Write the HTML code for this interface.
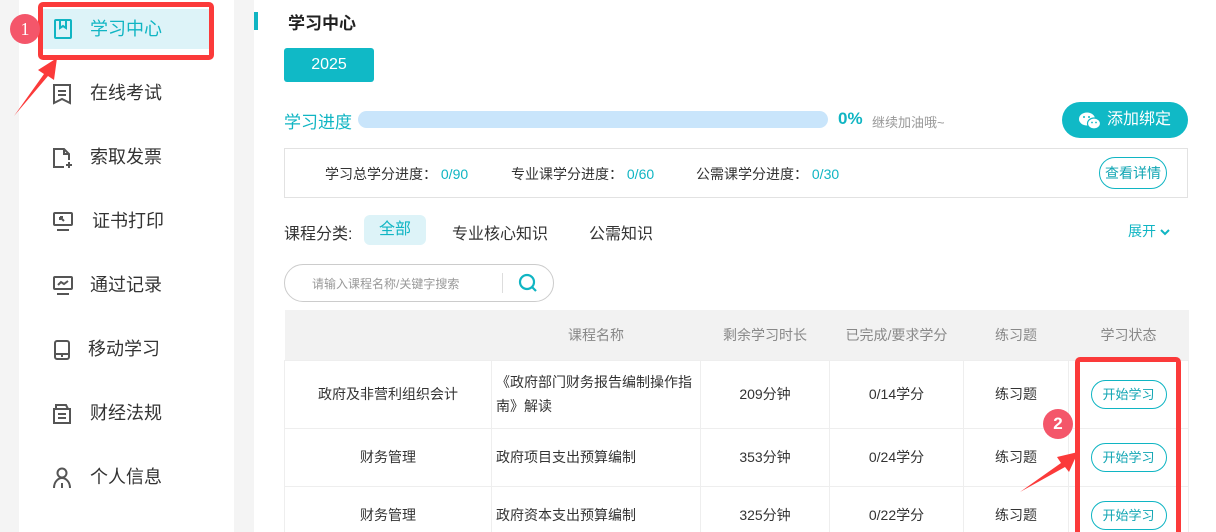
<!DOCTYPE html>
<html style="overflow:hidden;height:532px"><head><meta charset="utf-8"><style>
*{margin:0;padding:0;box-sizing:border-box}
body{width:1216px;height:532px;overflow:hidden;background:#f4f4f4;font-family:"Liberation Sans","Noto Sans CJK SC",sans-serif;position:relative;color:#333}
.a{position:absolute}
.side{left:19px;top:0;width:215px;height:532px;background:#fff}
.item{position:absolute;left:0;width:215px;height:40px;font-size:18px;color:#333;line-height:40px}
.item span{position:absolute;left:71px}
.item svg{position:absolute;left:33px;top:10px}
.main{left:254px;top:0;width:962px;height:532px;background:#fff}
.teal{color:#10b5c3}
table{border-collapse:collapse;position:absolute;left:284px;top:310px;width:904px;font-size:14px;table-layout:fixed}
th{background:#f2f2f2;color:#888;font-weight:normal;height:50px;border:none}
td{border:1px solid #eee;text-align:center;color:#333}
.btn{display:inline-block;border:1px solid #10b5c3;color:#10a5b3;border-radius:15px;width:76px;height:29px;line-height:27px;font-size:13px}
</style></head><body>
<div class="a side">
 <div class="item" style="top:9px;left:21px;width:171px;background:#ddf3f8;color:#10b5c3"><svg style="left:13px" width="20" height="20" viewBox="0 0 20 20" fill="none" stroke="#10b5c3" stroke-width="2"><rect x="2" y="1" width="16" height="18" rx="1"/><path d="M7 1v8l3-2 3 2V1"/></svg><span style="left:50px">学习中心</span></div>
 <div class="item" style="top:73px"><svg width="20" height="22" viewBox="0 0 20 22" fill="none" stroke="#555" stroke-width="2"><path d="M2 2h16v18l-8-4-8 4z"/><path d="M6 8h8M6 12h8"/></svg><span>在线考试</span></div>
 <div class="item" style="top:137px"><svg width="22" height="22" viewBox="0 0 22 22" fill="none" stroke="#555" stroke-width="2"><path d="M12 20H2V2h10l5 5v6"/><path d="M12 2v5h5M17 15v6M14 18h6"/></svg><span>索取发票</span></div>
 <div class="item" style="top:201px"><svg width="22" height="22" viewBox="0 0 22 22" fill="none" stroke="#555" stroke-width="2"><rect x="2" y="2" width="18" height="12" rx="1"/><path d="M5 19h12M8 6l4 4M8 6v3M8 6h3"/></svg><span style="left:73px">证书打印</span></div>
 <div class="item" style="top:265px"><svg width="22" height="22" viewBox="0 0 22 22" fill="none" stroke="#555" stroke-width="2"><rect x="2" y="2" width="18" height="12" rx="1"/><path d="M5 19h12M6 10l3-3 3 2 4-3"/></svg><span>通过记录</span></div>
 <div class="item" style="top:329px"><svg width="20" height="22" viewBox="0 0 20 22" fill="none" stroke="#555" stroke-width="2"><rect x="3" y="2" width="14" height="18" rx="2"/><path d="M3 15h14M9 17h2"/></svg><span style="left:69px">移动学习</span></div>
 <div class="item" style="top:393px"><svg width="20" height="22" viewBox="0 0 20 22" fill="none" stroke="#555" stroke-width="2"><path d="M2 20V6h16v14zM4 6V2h10l2 4M6 11h8M6 15h8"/></svg><span>财经法规</span></div>
 <div class="item" style="top:457px"><svg width="20" height="22" viewBox="0 0 20 22" fill="none" stroke="#555" stroke-width="2"><circle cx="10" cy="6" r="4.5"/><path d="M2 21c0-6 4-10 8-10s8 4 8 10M10 16v5"/></svg><span>个人信息</span></div>
</div>
<div class="a main"></div>
<div class="a" style="left:254px;top:12px;width:4px;height:18px;background:#10b5c3"></div>
<div class="a" style="left:288px;top:9px;font-size:17px;font-weight:bold;color:#222">学习中心</div>
<div class="a" style="left:284px;top:48px;width:90px;height:34px;background:#10b9c6;border-radius:3px;color:#fff;font-size:16px;text-align:center;line-height:34px">2025</div>
<div class="a teal" style="left:284px;top:108px;font-size:17px">学习进度</div>
<div class="a" style="left:358px;top:111px;width:470px;height:17px;background:#c9e5fb;border-radius:9px"></div>
<div class="a teal" style="left:838px;top:109px;font-size:17px;font-weight:bold">0%</div>
<div class="a" style="left:872px;top:112px;font-size:13px;color:#999">继续加油哦~</div>
<div class="a" style="left:1062px;top:102px;width:126px;height:36px;background:#10b9c6;border-radius:18px;color:#fff;font-size:16px;line-height:36px"><svg class="a" style="left:17px;top:10px" width="22" height="18" viewBox="0 0 22 18"><ellipse cx="8" cy="7" rx="8" ry="6.5" fill="#fff"/><ellipse cx="15" cy="11.5" rx="6.5" ry="5.5" fill="#fff" stroke="#10b9c6" stroke-width="1.2"/><circle cx="5" cy="5" r="1" fill="#10b9c6"/><circle cx="10" cy="5" r="1" fill="#10b9c6"/><circle cx="13" cy="10.5" r=".9" fill="#10b9c6"/><circle cx="17" cy="10.5" r=".9" fill="#10b9c6"/></svg><span class="a" style="left:45px">添加绑定</span></div>
<div class="a" style="left:284px;top:148px;width:904px;height:50px;border:1px solid #e2e2e2"></div>
<div class="a" style="left:325px;top:164px;font-size:14px;color:#333">学习总学分进度：&nbsp;<span class="teal">0/90</span></div>
<div class="a" style="left:511px;top:164px;font-size:14px;color:#333">专业课学分进度：&nbsp;<span class="teal">0/60</span></div>
<div class="a" style="left:696px;top:164px;font-size:14px;color:#333">公需课学分进度：&nbsp;<span class="teal">0/30</span></div>
<div class="a" style="left:1099px;top:157px;width:68px;height:32px;border:1px solid #10b5c3;border-radius:16px;color:#10a5b3;font-size:14px;text-align:center;line-height:30px">查看详情</div>
<div class="a" style="left:284px;top:220px;font-size:16px;color:#333">课程分类:</div>
<div class="a" style="left:364px;top:215px;width:62px;height:30px;background:#ddf3f8;border-radius:6px;color:#10b5c3;font-size:16px;text-align:center;line-height:30px">全部</div>
<div class="a" style="left:452px;top:220px;font-size:16px;color:#333">专业核心知识</div>
<div class="a" style="left:589px;top:220px;font-size:16px;color:#333">公需知识</div>
<div class="a teal" style="left:1128px;top:221px;font-size:14px">展开 <svg width="10" height="8" viewBox="0 0 10 8"><path d="M1 2l4 4 4-4" stroke="#10b5c3" stroke-width="2" fill="none"/></svg></div>
<div class="a" style="left:284px;top:264px;width:270px;height:38px;border:1px solid #ccc;border-radius:19px"></div>
<div class="a" style="left:312px;top:275px;font-size:12px;color:#999">请输入课程名称/关键字搜索</div>
<div class="a" style="left:502px;top:273px;width:1px;height:20px;background:#ddd"></div>
<svg class="a" style="left:518px;top:273px" width="20" height="20" viewBox="0 0 20 20" fill="none" stroke="#10b5c3" stroke-width="2.2"><circle cx="9" cy="9" r="7"/><path d="M14 14l4 4"/></svg>
<table>
<colgroup><col style="width:207px"><col style="width:209px"><col style="width:129px"><col style="width:134px"><col style="width:105px"><col style="width:120px"></colgroup>
<tr><th></th><th>课程名称</th><th>剩余学习时长</th><th>已完成/要求学分</th><th>练习题</th><th>学习状态</th></tr>
<tr style="height:68px"><td>政府及非营利组织会计</td><td style="text-align:left;padding-left:4px;line-height:24px">《政府部门财务报告编制操作指南》解读</td><td>209分钟</td><td>0/14学分</td><td>练习题</td><td><span class="btn">开始学习</span></td></tr>
<tr style="height:58px"><td>财务管理</td><td style="text-align:left;padding-left:4px">政府项目支出预算编制</td><td>353分钟</td><td>0/24学分</td><td>练习题</td><td><span class="btn">开始学习</span></td></tr>
<tr style="height:58px"><td>财务管理</td><td style="text-align:left;padding-left:4px">政府资本支出预算编制</td><td>325分钟</td><td>0/22学分</td><td>练习题</td><td><span class="btn">开始学习</span></td></tr>
</table>
<div class="a" style="left:38px;top:2px;width:176px;height:58px;border:5px solid #fb3a3a;border-radius:5px"></div>
<div class="a" style="left:1075px;top:357px;width:106px;height:180px;border:5px solid #fb3a3a;border-radius:5px"></div>
<div class="a" style="left:10px;top:14px;width:30px;height:30px;border-radius:50%;background:#f4566a;color:#fff;font-family:'Liberation Serif',serif;font-size:18px;text-align:center;line-height:30px">1</div>
<div class="a" style="left:1043px;top:409px;width:30px;height:30px;border-radius:50%;background:#f4566a;color:#fff;font-size:17px;font-weight:bold;text-align:center;line-height:30px">2</div>
<svg class="a" style="left:0;top:0" width="1216" height="532"><polygon points="14,116 44,74 38,70 57,58 54,80 48,76" fill="#fb3a3a"/><polygon points="1020,492 1061,463 1057,457 1078,452 1069,472 1065,467" fill="#fb3a3a"/></svg>
</body></html>
